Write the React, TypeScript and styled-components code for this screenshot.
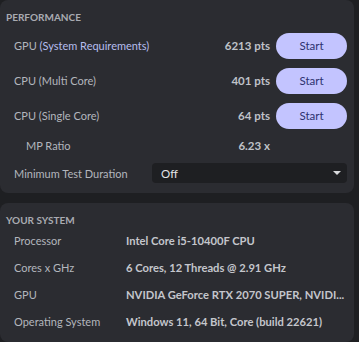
import React from "react";
import styled, { createGlobalStyle } from "styled-components";

const Global = createGlobalStyle`
  html, body { margin: 0; padding: 0; background: #1e1f22; }
  body { font-family: Lato, "Noto Sans", sans-serif; overflow: hidden; }
`;

const Page = styled.div`
  width: 359px;
  height: 342px;
  background: #1e1f22;
  display: flex;
  flex-direction: column;
  gap: 10px;
`;

const Card = styled.section`
  width: 354px;
  background: #2b2c31;
  border-radius: 8px;
  padding: 10px 7px 5px 14px;
  box-sizing: border-box;
  display: flex;
  flex-direction: column;
`;

const Heading = styled.h2<{ $gap: number }>`
  margin: 0 0 ${(p) => p.$gap}px -8px;
  font-size: 10px;
  line-height: 14px;
  font-weight: 700;
  color: #a9abb1;
`;

const PerfRow = styled.div<{ $h: number }>`
  height: ${(p) => p.$h}px;
  display: grid;
  grid-template-columns: 1fr auto 71px;
  column-gap: 6px;
  align-items: center;
`;

const Label = styled.span<{ $indent?: number }>`
  font-size: 11px;
  color: #b3b6bd;
  padding-left: ${(p) => p.$indent || 0}px;
`;

const Accent = styled.span`
  color: #b6bdee;
`;

const Value = styled.span`
  font-size: 11.5px;
  font-weight: 700;
  color: #bfc2c8;
  text-align: right;
`;

const StartButton = styled.button`
  height: 26px;
  border: none;
  border-radius: 13px;
  background: #c3c4ff;
  color: #2d3270;
  font-family: inherit;
  font-size: 11.5px;
  padding: 0;
  cursor: pointer;
`;

const SelectRow = styled.div`
  height: 30px;
  display: grid;
  grid-template-columns: 138px 1fr;
  align-items: center;
`;

const Select = styled.div`
  height: 20px;
  background: #1e1f22;
  border-radius: 4px;
  display: flex;
  align-items: center;
  justify-content: space-between;
  padding: 0 6px 0 9px;
  font-size: 11.5px;
  color: #e4e5e8;
`;

const Caret = styled.span`
  width: 0;
  height: 0;
  border-left: 4px solid transparent;
  border-right: 4px solid transparent;
  border-top: 4px solid #d8d9dc;
`;

const SysCard = styled(Card)`
  flex: 1;
  padding-right: 4px;
`;

const SysRow = styled.div`
  height: 27px;
  display: grid;
  grid-template-columns: 112px 1fr;
  align-items: center;
`;

const SysValue = styled.span`
  font-size: 11.2px;
  font-weight: 700;
  color: #c4c6cc;
  white-space: nowrap;
`;

const perf = [
  { label: "GPU", accent: " (System Requirements)", value: "6213 pts" },
  { label: "CPU (Multi Core)", value: "401 pts" },
  { label: "CPU (Single Core)", value: "64 pts" },
];

const sys = [
  ["Processor", "Intel Core i5-10400F CPU"],
  ["Cores x GHz", "6 Cores, 12 Threads @ 2.91 GHz"],
  ["GPU", "NVIDIA GeForce RTX 2070 SUPER, NVIDI..."],
  ["Operating System", "Windows 11, 64 Bit, Core (build 22621)"],
];

export default function App() {
  return (
    <Page>
      <Global />
      <Card>
        <Heading $gap={4}>PERFORMANCE</Heading>
        {perf.map((r) => (
          <PerfRow key={r.label} $h={35}>
            <Label>
              {r.label}
              {r.accent && <Accent>{r.accent}</Accent>}
            </Label>
            <Value>{r.value}</Value>
            <StartButton>Start</StartButton>
          </PerfRow>
        ))}
        <PerfRow $h={25}>
          <Label $indent={12}>MP Ratio</Label>
          <Value>6.23 x</Value>
          <span />
        </PerfRow>
        <SelectRow>
          <Label>Minimum Test Duration</Label>
          <Select>
            <span>Off</span>
            <Caret />
          </Select>
        </SelectRow>
      </Card>
      <SysCard>
        <Heading $gap={0}>YOUR SYSTEM</Heading>
        {sys.map(([k, v]) => (
          <SysRow key={k}>
            <Label>{k}</Label>
            <SysValue>{v}</SysValue>
          </SysRow>
        ))}
      </SysCard>
    </Page>
  );
}
